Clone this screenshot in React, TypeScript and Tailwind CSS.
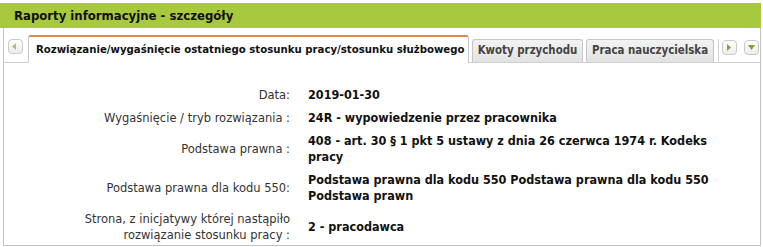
import React from "react";

const cond = '"DejaVu Sans Condensed", "DejaVu Sans", Verdana, sans-serif';
const wide = '"DejaVu Sans", Verdana, sans-serif';

function Arrow({ dir, color }: { dir: "left" | "right" | "down"; color: string }) {
  const pts = dir === "left" ? "7,3 3,6.5 7,10" : dir === "right" ? "4,3 8,6.5 4,10" : "3,4 10,4 6.5,9";
  return (
    <svg width="13" height="13" viewBox="0 0 13 13">
      <polygon points={pts} fill={color} />
    </svg>
  );
}

function ScrollBtn({ dir, color }: { dir: "left" | "right" | "down"; color: string }) {
  return (
    <div className="w-[15px] h-[15px] rounded-[4px] border border-[#c9c9c9] bg-gradient-to-b from-white to-[#ececec] flex items-center justify-center">
      <Arrow dir={dir} color={color} />
    </div>
  );
}

const rows: { label: string[]; value: string[] }[] = [
  { label: ["Data:"], value: ["2019-01-30"] },
  { label: ["Wygaśnięcie / tryb rozwiązania :"], value: ["24R - wypowiedzenie przez pracownika"] },
  {
    label: ["Podstawa prawna :"],
    value: ["408 - art. 30 § 1 pkt 5 ustawy z dnia 26 czerwca 1974 r. Kodeks", "pracy"],
  },
  {
    label: ["Podstawa prawna dla kodu 550:"],
    value: ["Podstawa prawna dla kodu 550 Podstawa prawna dla kodu 550", "Podstawa prawn"],
  },
  {
    label: ["Strona, z inicjatywy której nastąpiło", "rozwiązanie stosunku pracy :"],
    value: ["2 - pracodawca"],
  },
];

export default function App() {
  return (
    <div className="w-[763px] h-[247px] bg-white overflow-hidden" style={{ fontFamily: cond }}>
      <div className="mt-[3px] w-[761px] h-[25px] bg-[#a8c83e] flex items-center pl-[14px]">
        <span className="text-[13px] font-bold text-[#111]">Raporty informacyjne - szczegóły</span>
      </div>
      <div className="ml-[3px] w-[758px] h-[218px] border-l border-r border-b border-[#c4c4c4]">
        <div className="h-[35px] flex items-end border-b border-[#cfcfcf]">
          <div className="w-[24px] self-stretch flex items-start pt-[11px] pl-[4px]">
            <ScrollBtn dir="left" color="#a8c080" />
          </div>
          <div className="w-[441px] h-[28px] -mb-px bg-white border-t-[2px] border-t-[#d98d4c] border-l border-r border-[#c8c8c8] rounded-t-[3px] flex items-center pl-[7px]">
            <span className="text-[11.3px] font-bold text-[#111] whitespace-nowrap">
              Rozwiązanie/wygaśnięcie ostatniego stosunku pracy/stosunku służbowego
            </span>
          </div>
          <div className="ml-[3px] w-[111px] h-[23px] bg-gradient-to-b from-[#f3f3f3] to-[#e2e2e2] border border-b-0 border-[#c6c6c6] rounded-t-[3px] flex items-center justify-center">
            <span className="text-[11.4px] font-bold text-[#444] whitespace-nowrap">Kwoty przychodu</span>
          </div>
          <div className="ml-[3px] w-[128px] h-[23px] bg-gradient-to-b from-[#f3f3f3] to-[#e2e2e2] border border-b-0 border-[#c6c6c6] rounded-t-[3px] flex items-center justify-center">
            <span className="text-[11.4px] font-bold text-[#444] whitespace-nowrap">Praca nauczycielska</span>
          </div>
          <div className="ml-[4px] w-px h-[23px] bg-[#d0d0d0]" />
          <div className="flex-1 self-stretch flex items-start pt-[12px] pl-[3px] gap-[7px]">
            <ScrollBtn dir="right" color="#7aa82a" />
            <ScrollBtn dir="down" color="#7aa82a" />
          </div>
        </div>
        <div className="pt-[24px] flex flex-col gap-y-[7px] leading-[16px]">
          {rows.map((r, i) => (
            <div key={i} className="flex items-center">
              <div
                className="w-[286px] shrink-0 text-right text-[11.5px] text-[#333]"
                style={{ fontFamily: wide }}
              >
                {r.label.map((l, j) => (
                  <div key={j} className="whitespace-nowrap">{l}</div>
                ))}
              </div>
              <div className="ml-[18px] text-[12.5px] font-bold text-[#111]">
                {r.value.map((v, j) => (
                  <div key={j} className="whitespace-nowrap">{v}</div>
                ))}
              </div>
            </div>
          ))}
        </div>
      </div>
    </div>
  );
}
